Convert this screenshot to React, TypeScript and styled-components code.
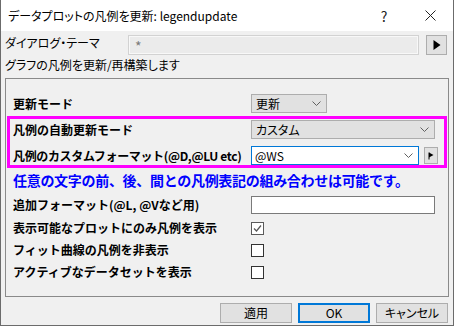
import React from "react";
import styled, { createGlobalStyle } from "styled-components";

const GlobalStyle = createGlobalStyle`
  html, body {
    margin: 0;
    padding: 0;
    background: #f0f0f0;
  }

  body {
    font-family: "Noto Sans CJK JP", "Noto Sans", sans-serif;
    color: #000;
  }
`;

const Window = styled.div`
  width: 454px;
  height: 326px;
  box-sizing: border-box;
  border: 1px solid #6b6b6b;
  border-top: none;
  background: #f0f0f0;
  display: flex;
  flex-direction: column;
  font-size: 12px;
`;

const TitleBar = styled.div`
  height: 31px;
  flex: none;
  background: #fff;
  display: flex;
  align-items: center;
  padding-left: 7px;
`;

const TitleText = styled.div`
  flex: 1;
  font-size: 12px;
  line-height: 1;
  font-feature-settings: "palt" 1;
  white-space: nowrap;
`;

const CaptionButton = styled.div`
  width: 46px;
  height: 31px;
  display: flex;
  align-items: center;
  justify-content: center;
  font-size: 14px;
  color: #222;
`;

const Body = styled.div`
  padding: 0 4px;
  display: flex;
  flex-direction: column;
`;

const ThemeRow = styled.div`
  margin-top: 4px;
  height: 20px;
  display: flex;
  align-items: center;
`;

const PlainText = styled.div`
  font-size: 12px;
  line-height: 16px;
  font-feature-settings: "palt" 1;
  white-space: nowrap;
`;

const ThemeLabel = styled(PlainText)`
  width: 123px;
  margin-top: -5px;
`;

const ThemeField = styled.div`
  width: 291px;
  height: 20px;
  box-sizing: border-box;
  border: 1px solid #d2d2d2;
  box-shadow: inset 0 0 0 1px #f8f8f8;
  background: #ebebeb;
  color: #7a7a7a;
  font-size: 14px;
  line-height: 20px;
  padding-left: 6px;
`;

const PushButton = styled.div<{ $w: number; $h: number; $default?: boolean }>`
  width: ${(p) => p.$w}px;
  height: ${(p) => p.$h}px;
  box-sizing: border-box;
  flex: none;
  background: #e1e1e1;
  border: ${(p) => (p.$default ? "2px solid #0078d7" : "1px solid #adadad")};
  display: flex;
  align-items: center;
  justify-content: center;
  font-size: 12px;
  font-feature-settings: "palt" 1;
  line-height: 1;
`;

const Description = styled(PlainText)`
  margin-top: 2px;
`;

const GroupBox = styled.div`
  margin-top: 5px;
  height: 219px;
  box-sizing: border-box;
  border: 1px solid #8a8a8a;
  padding-top: 15px;
  display: flex;
  flex-direction: column;
`;

const Row = styled.div<{ $h: number; $top?: number; $inset?: boolean }>`
  height: ${(p) => p.$h}px;
  margin-top: ${(p) => p.$top ?? 0}px;
  padding: ${(p) => (p.$inset ? "0" : "0 13px 0 7px")};
  display: grid;
  grid-template-columns: 238px 1fr;
  align-items: center;
`;

const Label = styled.div<{ $tight?: boolean }>`
  font-weight: 700;
  font-size: 12px;
  line-height: 1;
  white-space: nowrap;
  letter-spacing: ${(p) => (p.$tight ? "-0.35px" : "0")};
`;

const Select = styled.div<{ $w?: number }>`
  width: ${(p) => (p.$w ? `${p.$w}px` : "100%")};
  height: 19px;
  box-sizing: border-box;
  background: #e1e1e1;
  border: 1px solid #adadad;
  display: flex;
  align-items: center;
  justify-content: space-between;
  padding: 0 5px 0 4px;
  font-size: 12px;
  font-feature-settings: "palt" 1;
`;

const Highlight = styled.div`
  margin: 3px 1px 0;
  border: 3px solid #ff00ff;
  padding: 1px 9px 0 3px;
  display: flex;
  flex-direction: column;
  gap: 7px;
`;

const ComboLine = styled.div`
  display: flex;
  align-items: center;
  gap: 5px;
`;

const Combo = styled.div`
  width: 168px;
  height: 19px;
  box-sizing: border-box;
  background: #fff;
  border: 1px solid #0078d7;
  display: flex;
  align-items: center;
  justify-content: space-between;
  padding: 0 5px 0 3px;
  font-size: 12px;
`;

const Hint = styled.div`
  margin-top: 2px;
  height: 20px;
  line-height: 20px;
  padding-left: 7px;
  color: #0000ff;
  font-weight: 700;
  font-size: 14px;
  letter-spacing: -0.3px;
  white-space: nowrap;
`;

const TextInput = styled.div`
  height: 18px;
  box-sizing: border-box;
  background: #fff;
  border: 1px solid #7a7a7a;
`;

const CheckBox = styled.div<{ $checked?: boolean }>`
  width: 13px;
  height: 13px;
  box-sizing: border-box;
  background: #fff;
  border: 1px solid ${(p) => (p.$checked ? "#5a5a5a" : "#333")};
  display: flex;
  align-items: center;
  justify-content: center;
`;

const ButtonBar = styled.div`
  margin-top: 6px;
  display: flex;
  justify-content: flex-end;
  gap: 6px;
  padding-right: 1px;
`;

const Chevron = () => (
  <svg width="9" height="5" viewBox="0 0 9 5">
    <polyline points="0.5,0.5 4.5,4.5 8.5,0.5" fill="none" stroke="#606060" strokeWidth="1" />
  </svg>
);

const CloseIcon = () => (
  <svg width="11" height="11" viewBox="0 0 11 11">
    <path d="M0.5 0.5 L10.5 10.5 M10.5 0.5 L0.5 10.5" stroke="#222" strokeWidth="1" />
  </svg>
);

const checks = [
  { label: "表示可能なプロットにのみ凡例を表示", checked: true },
  { label: "フィット曲線の凡例を非表示", checked: false },
  { label: "アクティブなデータセットを表示", checked: false },
];

export default function App() {
  return (
    <>
      <GlobalStyle />
      <Window>
        <TitleBar>
          <TitleText>データプロットの凡例を更新: legendupdate</TitleText>
          <CaptionButton>?</CaptionButton>
          <CaptionButton>
            <CloseIcon />
          </CaptionButton>
        </TitleBar>
        <Body>
          <ThemeRow>
            <ThemeLabel>ダイアログ・テーマ</ThemeLabel>
            <ThemeField>*</ThemeField>
            <PushButton $w={21} $h={20} style={{ marginLeft: 7 }}>
              <svg width="8" height="10" viewBox="0 0 8 10">
                <polygon points="0.5,0 7.5,5 0.5,10" fill="#000" />
              </svg>
            </PushButton>
          </ThemeRow>
          <Description>グラフの凡例を更新/再構築します</Description>
          <GroupBox>
            <Row $h={19}>
              <Label>更新モード</Label>
              <Select $w={76}>
                <span>更新</span>
                <Chevron />
              </Select>
            </Row>
            <Highlight>
              <Row $h={19} $inset>
                <Label>凡例の自動更新モード</Label>
                <Select>
                  <span>カスタム</span>
                  <Chevron />
                </Select>
              </Row>
              <Row $h={19} $inset>
                <Label $tight>凡例のカスタムフォーマット(@D,@LU etc)</Label>
                <ComboLine>
                  <Combo>
                    <span>@WS</span>
                    <Chevron />
                  </Combo>
                  <PushButton $w={14} $h={17}>
                    <svg width="6" height="8" viewBox="0 0 6 8">
                      <path d="M1 0.5 L1 7.5" stroke="#000" strokeWidth="1" />
                      <polygon points="1,0.5 5.5,3 1,5.5" fill="#000" />
                    </svg>
                  </PushButton>
                </ComboLine>
              </Row>
            </Highlight>
            <Hint>任意の文字の前、後、間との凡例表記の組み合わせは可能です。</Hint>
            <Row $h={18} $top={6}>
              <Label>追加フォーマット(@L, @Vなど用)</Label>
              <TextInput />
            </Row>
            {checks.map((c, i) => (
              <Row key={c.label} $h={22} $top={i === 0 ? 3 : 0}>
                <Label>{c.label}</Label>
                <CheckBox $checked={c.checked}>
                  {c.checked && (
                    <svg width="9" height="9" viewBox="0 0 9 9">
                      <polyline points="1,4.5 3.5,7 8,1.5" fill="none" stroke="#555" strokeWidth="1.2" />
                    </svg>
                  )}
                </CheckBox>
              </Row>
            ))}
          </GroupBox>
          <ButtonBar>
            <PushButton $w={72} $h={20}>適用</PushButton>
            <PushButton $w={72} $h={20} $default>OK</PushButton>
            <PushButton $w={72} $h={20}>キャンセル</PushButton>
          </ButtonBar>
        </Body>
      </Window>
    </>
  );
}
